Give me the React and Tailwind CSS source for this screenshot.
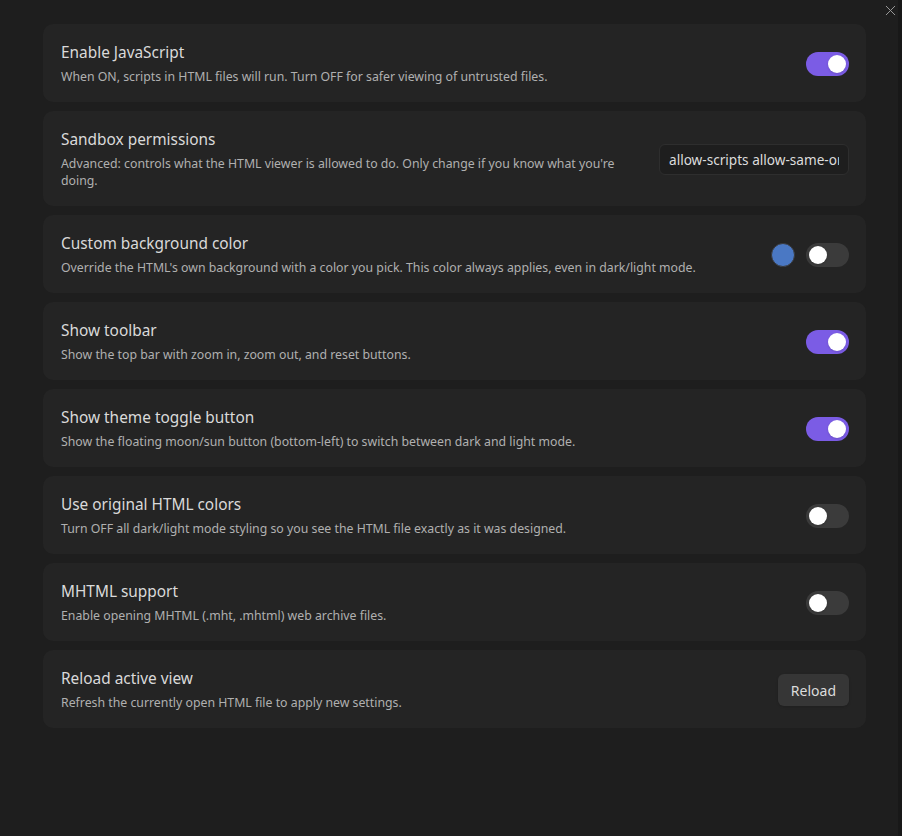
import { useState } from "react";
import { X } from "lucide-react";

const SETTINGS = [
  {
    id: "js",
    title: "Enable JavaScript",
    desc: "When ON, scripts in HTML files will run. Turn OFF for safer viewing of untrusted files.",
    kind: "toggle",
    on: true,
  },
  {
    id: "sandbox",
    title: "Sandbox permissions",
    desc: "Advanced: controls what the HTML viewer is allowed to do. Only change if you know what you're doing.",
    kind: "input",
    value: "allow-scripts allow-same-origin",
  },
  {
    id: "bg",
    title: "Custom background color",
    desc: "Override the HTML's own background with a color you pick. This color always applies, even in dark/light mode.",
    kind: "color",
    on: false,
  },
  {
    id: "toolbar",
    title: "Show toolbar",
    desc: "Show the top bar with zoom in, zoom out, and reset buttons.",
    kind: "toggle",
    on: true,
  },
  {
    id: "theme",
    title: "Show theme toggle button",
    desc: "Show the floating moon/sun button (bottom-left) to switch between dark and light mode.",
    kind: "toggle",
    on: true,
  },
  {
    id: "original",
    title: "Use original HTML colors",
    desc: "Turn OFF all dark/light mode styling so you see the HTML file exactly as it was designed.",
    kind: "toggle",
    on: false,
  },
  {
    id: "mhtml",
    title: "MHTML support",
    desc: "Enable opening MHTML (.mht, .mhtml) web archive files.",
    kind: "toggle",
    on: false,
  },
  {
    id: "reload",
    title: "Reload active view",
    desc: "Refresh the currently open HTML file to apply new settings.",
    kind: "button",
  },
];

function Toggle({ initial }) {
  const [on, setOn] = useState(initial);
  return (
    <button
      onClick={() => setOn(v => !v)}
      className={`relative w-[43px] h-[24px] rounded-full flex-shrink-0 transition-colors ${on ? "bg-[#7b5ce5]" : "bg-[#3b3b3b]"}`}
    >
      <span
        className={`absolute top-[3px] w-[18px] h-[18px] rounded-full bg-white shadow transition-all ${on ? "left-[22px]" : "left-[3px]"}`}
      />
    </button>
  );
}

function Control({ s }) {
  if (s.kind === "toggle") return <Toggle initial={s.on} />;
  if (s.kind === "input")
    return (
      <input
        defaultValue={s.value}
        className="w-[190px] h-[31px] px-[9px] rounded-md bg-[#1e1e1e] border border-[#2e2e2e] text-[#dcdcdc] text-[13.6px] outline-none flex-shrink-0"
      />
    );
  if (s.kind === "color")
    return (
      <div className="flex items-center gap-[11px] flex-shrink-0">
        <span className="w-[24px] h-[24px] rounded-full bg-[#4a78c4] border border-[#3a3a3a]" />
        <Toggle initial={s.on} />
      </div>
    );
  return (
    <button className="h-[32px] px-[13px] rounded-md bg-[#363636] text-[#dcdcdc] text-[14px] shadow flex-shrink-0">
      Reload
    </button>
  );
}

export default function App() {
  return (
    <div
      className="relative w-full h-[836px] bg-[#1e1e1e] overflow-hidden flex"
      style={{ fontFamily: '"Noto Sans", "Open Sans", sans-serif' }}
    >
      <div className="flex-1 pt-[24px] pl-[43px] pr-[32px] flex flex-col gap-[9px]">
        {SETTINGS.map(s => (
          <div
            key={s.id}
            className="bg-[#242424] rounded-[10px] pl-[18px] pr-[17px] pt-[19px] pb-[17px] flex items-center gap-[28px]"
          >
            <div className="flex-1 min-w-0">
              <p className="text-[#dadada] text-[15.4px] leading-[20px]">{s.title}</p>
              <p className="mt-[5px] text-[#b0b0b0] text-[12.3px] leading-[17px]">{s.desc}</p>
            </div>
            <Control s={s} />
          </div>
        ))}
      </div>
      <div className="w-[4px] bg-[#181818]" />
      <button className="absolute top-[2px] right-[3px] text-[#9a9a9a]">
        <X className="w-[17px] h-[17px]" strokeWidth={1.4} />
      </button>
    </div>
  );
}
